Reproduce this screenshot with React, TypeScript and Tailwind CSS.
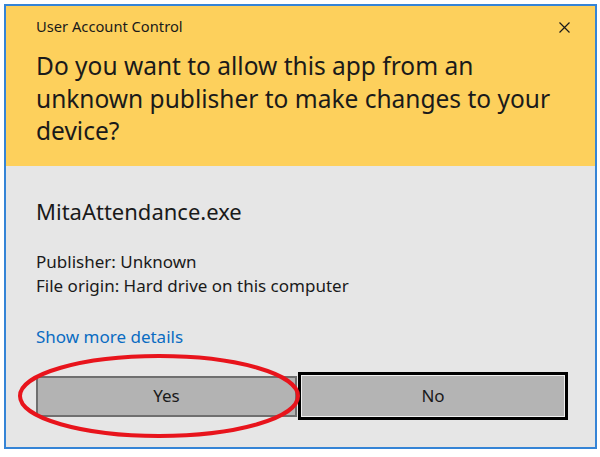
export default function App() {
  return (
    <div className="w-[600px] h-[457px] bg-white pt-[4px] pl-[4px] font-['Noto_Sans',sans-serif]">
      <div className="relative w-[593px] h-[445px] border-2 border-[#3584d6] bg-[#e6e6e6] flex flex-col">
        <div className="h-[160px] bg-[#fdd05c] pl-[30px] pr-[20px] pt-[10px] text-[#1a1a1a]">
          <div className="flex items-center justify-between">
            <span className="text-[14.7px] leading-[20px]">User Account Control</span>
            <svg width="11" height="11" viewBox="0 0 11 11" className="mr-[5px] mt-[2px]">
              <path d="M0.5 0.5 L10.5 10.5 M10.5 0.5 L0.5 10.5" stroke="#1a1a1a" strokeWidth="1.2" />
            </svg>
          </div>
          <p className="mt-[14px] text-[24.5px] leading-[32.5px] whitespace-nowrap">
            Do you want to allow this app from an
            <br />
            unknown publisher to make changes to your
            <br />
            device?
          </p>
        </div>
        <div className="flex-1 pl-[30px] pr-[27px] pt-[31px] text-[#1a1a1a]">
          <p className="text-[22px] leading-[28px]">MitaAttendance.exe</p>
          <div className="mt-[25px] text-[17px] leading-[24px]">
            <p>Publisher: Unknown</p>
            <p>File origin: Hard drive on this computer</p>
          </div>
          <p className="mt-[27px] text-[17px] leading-[24px] text-[#0a6cc2]">Show more details</p>
          <div className="mt-[23px] flex items-center">
            <button className="w-[261px] h-[41px] border-2 border-[#6f6f6f] bg-[#b3b3b3] text-[17px] text-[#1a1a1a]">
              Yes
            </button>
            <button className="ml-[1px] w-[270px] h-[48px] border-[3px] border-black bg-[#b4b4b4] text-[17px] text-[#1a1a1a] shadow-[inset_0_0_0_1px_#f0f0f0]">
              No
            </button>
          </div>
        </div>
        <svg className="absolute left-[10px] top-[346px] pointer-events-none" width="290" height="92" viewBox="0 0 290 92">
          <ellipse cx="143" cy="44" rx="139" ry="40" fill="none" stroke="#e8141c" strokeWidth="4" />
        </svg>
      </div>
    </div>
  );
}
